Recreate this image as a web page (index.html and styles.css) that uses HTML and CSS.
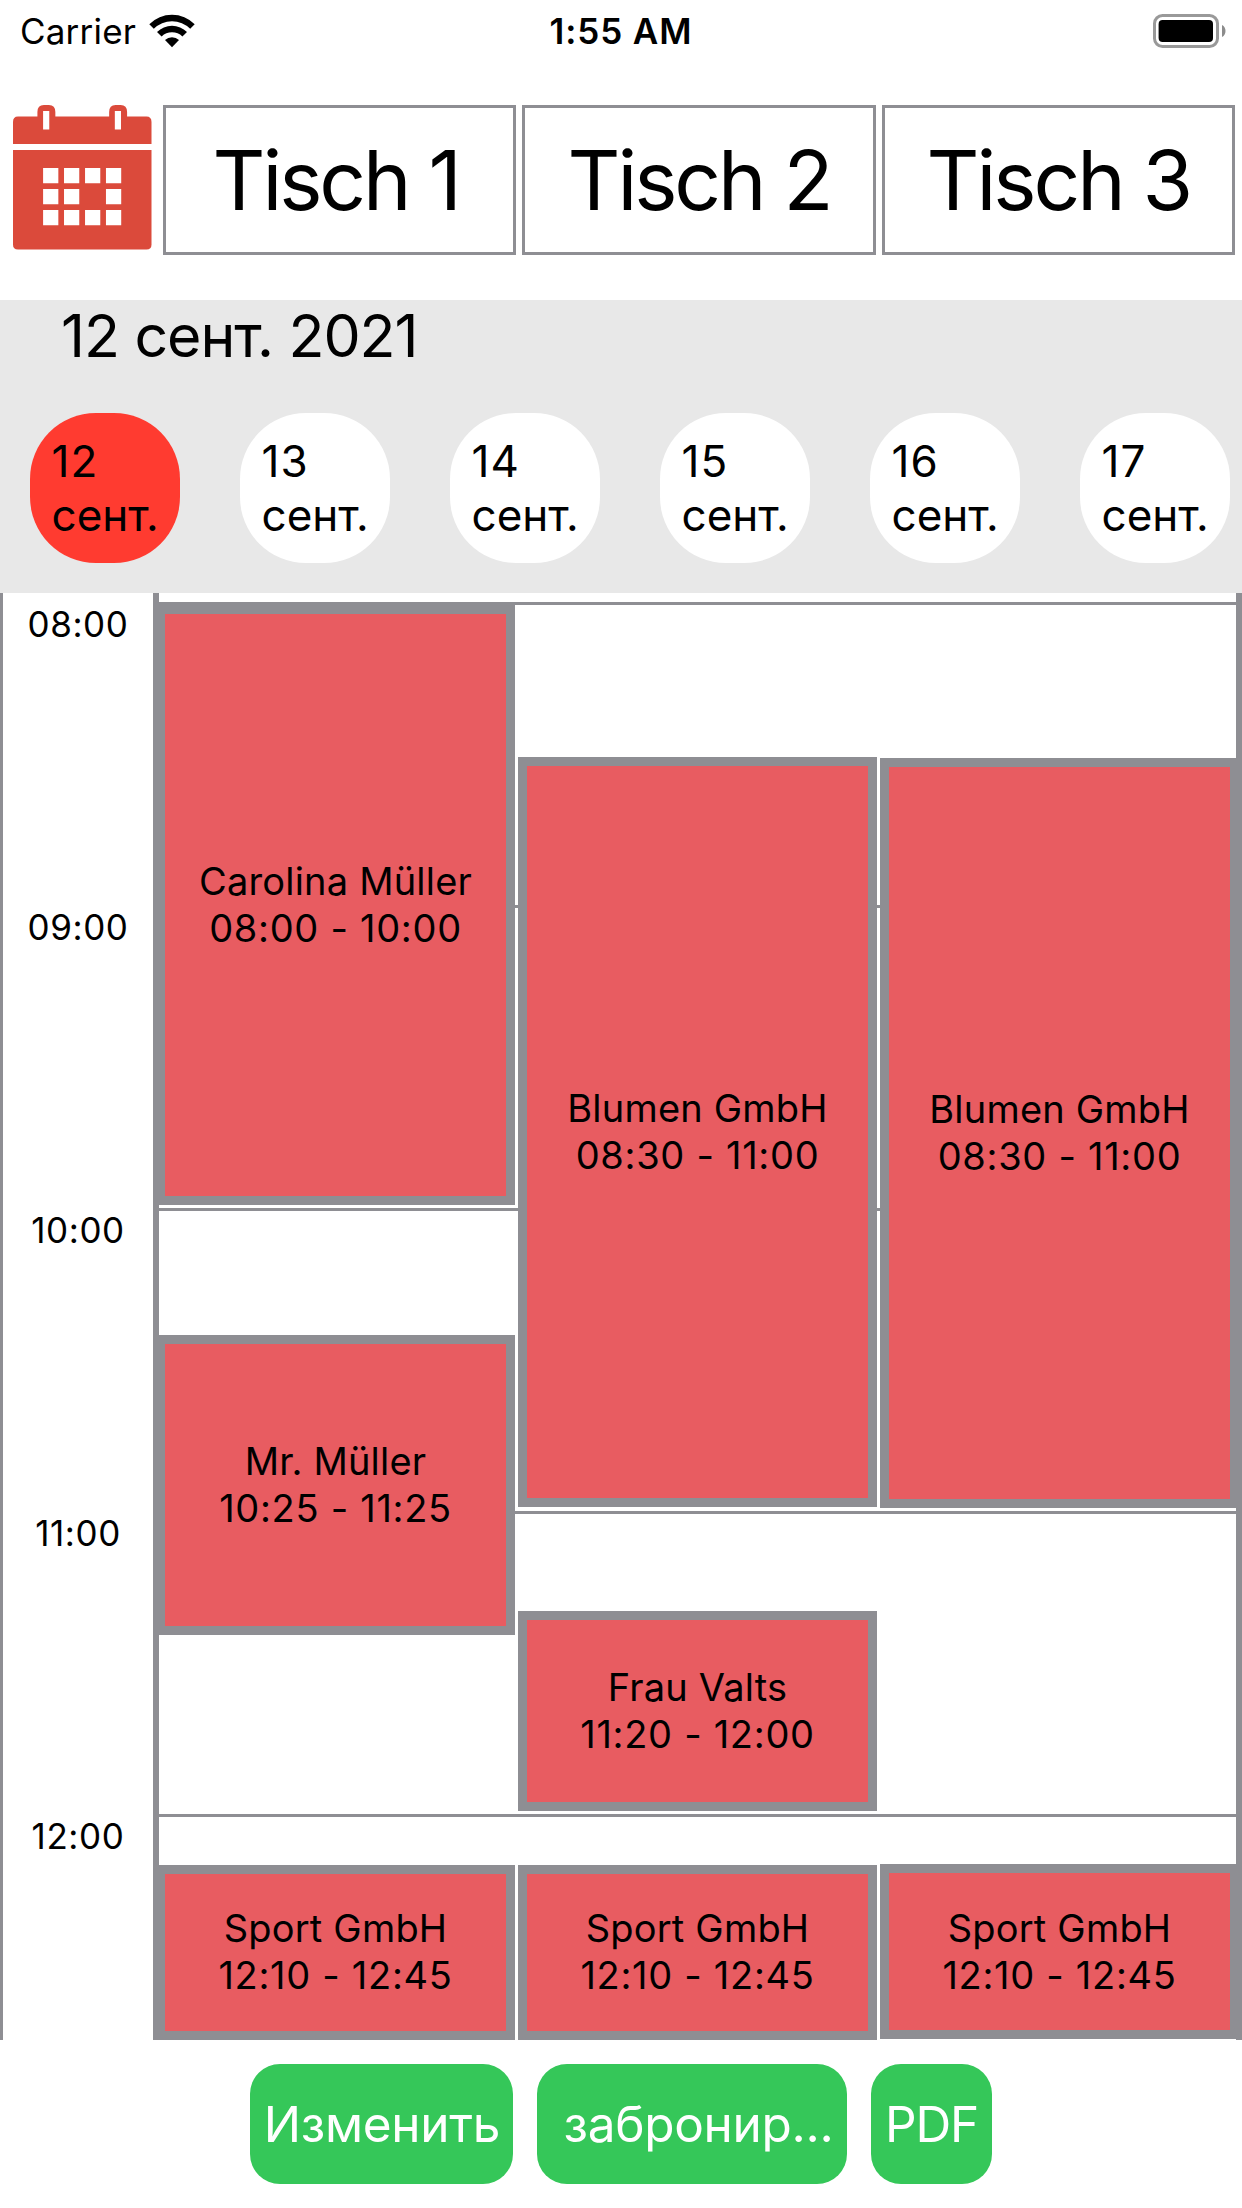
FILE: index.html
```html
<!DOCTYPE html>
<html lang="ru">
<head>
<meta charset="utf-8">
<title>Tischplan</title>
<link rel="stylesheet" href="styles.css">
</head>
<body>
<header class="status">
  <div class="status-left">
    <span class="carrier">Carrier</span>
    <svg class="wifi" width="46" height="34" viewBox="0 0 46 34">
      <path d="M0.3 10.2A32 32 0 0 1 45.7 10.2L41.2 14.8A25.8 25.8 0 0 0 4.8 14.8Z"/>
      <path d="M8 18A21.3 21.3 0 0 1 38 18L33.4 22.5A15 15 0 0 0 12.6 22.5Z"/>
      <path d="M16 26A10.2 10.2 0 0 1 30 26L23 33.2Z"/>
    </svg>
  </div>
  <time class="clock">1:55 AM</time>
  <svg class="battery" width="74" height="34" viewBox="0 0 74 34">
    <rect x="1.5" y="1.5" width="63" height="31" rx="8" fill="none" stroke="#999" stroke-width="3"/>
    <rect x="5.6" y="6" width="54.4" height="22" rx="4"/>
    <path d="M69 11C73.7 13.4 73.7 20.6 69 23Z" fill="#8c8c8c"/>
  </svg>
</header>

<nav class="tables">
  <svg class="calendar" width="138.500" height="145" viewBox="0 0 139 145" preserveAspectRatio="none">
    <path fill="#db4a3b" d="M0 39V17Q0 11.500 5 11.500H24.500V7Q24.500 0 31 0H36Q42.500 0 42.500 7V11.500H96.500V7Q96.500 0 103 0H108Q114.500 0 114.500 7V11.500H134Q139 11.500 139 17V39Z"/>
    <path fill="#db4a3b" d="M0 45H139V139.500Q139 144.500 134 144.500H5Q0 144.500 0 139.500Z"/>
    <path fill="#fff" d="M30.200 6h6.200v18.500h-6.200zM102.200 6h6.200v18.500h-6.200zM30.200 63h15.300v15.300h-15.300zM51.200 63h15.300v15.300h-15.300zM72.300 63h15.300v15.300h-15.300zM93.300 63h15.300v15.300h-15.300zM30.200 84h15.300v15.300h-15.300zM51.200 84h15.300v15.300h-15.300zM93.300 84h15.300v15.300h-15.300zM30.200 105h15.300v15.300h-15.300zM51.200 105h15.300v15.300h-15.300zM72.300 105h15.300v15.300h-15.300zM93.300 105h15.300v15.300h-15.300z"/>
  </svg>
  <div class="table-name first">Tisch 1</div>
  <div class="table-name">Tisch 2</div>
  <div class="table-name">Tisch 3</div>
</nav>

<section class="dates">
  <h1 class="date-title">12 сент. 2021</h1>
  <div class="days">
    <div class="day selected"><span class="num">12</span><span>сент.</span></div>
    <div class="day"><span class="num">13</span><span>сент.</span></div>
    <div class="day"><span class="num">14</span><span>сент.</span></div>
    <div class="day"><span class="num">15</span><span>сент.</span></div>
    <div class="day"><span class="num">16</span><span>сент.</span></div>
    <div class="day"><span class="num">17</span><span>сент.</span></div>
  </div>
</section>

<main class="schedule">
  <div class="hours">
    <div class="hour">08:00</div>
    <div class="hour">09:00</div>
    <div class="hour">10:00</div>
    <div class="hour">11:00</div>
    <div class="hour">12:00</div>
  </div>
  <div class="board">
    <div class="columns">
      <div class="column">
        <div class="event" style="margin-top:12px;height:600px"><span>Carolina Müller</span><span class="slot">08:00 - 10:00</span></div>
        <div class="event" style="margin-top:130px;height:300px"><span>Mr. Müller</span><span class="slot">10:25 - 11:25</span></div>
        <div class="event brief" style="margin-top:230px;height:175px"><span>Sport GmbH</span><span class="slot">12:10 - 12:45</span></div>
      </div>
      <div class="column">
        <div class="event" style="margin-top:164px;height:750px"><span>Blumen GmbH</span><span class="slot">08:30 - 11:00</span></div>
        <div class="event" style="margin-top:104px;height:200px"><span>Frau Valts</span><span class="slot">11:20 - 12:00</span></div>
        <div class="event brief" style="margin-top:54px;height:175px"><span>Sport GmbH</span><span class="slot">12:10 - 12:45</span></div>
      </div>
      <div class="column">
        <div class="event" style="margin-top:165px;height:750px"><span>Blumen GmbH</span><span class="slot">08:30 - 11:00</span></div>
        <div class="event" style="margin-top:356px;height:175px"><span>Sport GmbH</span><span class="slot">12:10 - 12:45</span></div>
      </div>
    </div>
  </div>
</main>

<footer class="actions">
  <button class="action edit">Изменить</button>
  <button class="action book">забронир...</button>
  <button class="action pdf">PDF</button>
</footer>
</body>
</html>
```
FILE: styles.css
```css
* { box-sizing: border-box; }

body {
  margin: 0;
  width: 1242px;
  height: 2208px;
  overflow: hidden;
  background: #fff;
  color: #000;
  font-family: Inter, "Liberation Sans", sans-serif;
}

svg { display: block; }

/* Status bar */
.status {
  display: grid;
  grid-template-columns: 1fr auto 1fr;
  align-items: center;
  height: 60px;
  padding: 0 15px 0 20px;
  font-size: 35px;
  line-height: 62px;
}
.status-left { display: flex; align-items: center; gap: 13px; }
.carrier { letter-spacing: .2px; }
.clock { padding-right: 5px; font-weight: 600; letter-spacing: .9px; }
.battery { justify-self: end; }

/* Table headings */
.tables {
  display: grid;
  grid-template-columns: 144px repeat(3, 1fr);
  column-gap: 6px;
  height: 150px;
  margin-top: 45px;
  padding: 0 7px 0 13px;
}
.table-name {
  display: flex;
  align-items: center;
  justify-content: center;
  border: 3px solid #8e8e93;
  font-size: 82px;
  letter-spacing: -3.1px;
}
.first { padding-right: 8px; }

/* Date strip */
.dates {
  height: 293px;
  margin-top: 45px;
  background: #e8e8e8;
}
.date-title {
  margin: 0;
  padding-left: 61px;
  font-size: 59px;
  font-weight: 400;
  line-height: 72px;
  letter-spacing: -1.05px;
}
.days { display: flex; gap: 60px; padding: 41px 0 0 30px; }
.day {
  display: flex;
  flex: none;
  flex-direction: column;
  justify-content: center;
  width: 150px;
  height: 150px;
  padding-left: 21.5px;
  border-radius: 66px;
  background: #fff;
  font-size: 44px;
  line-height: 54px;
}
.num { letter-spacing: 1px; }
.selected { background: #ff3b30; }

/* Schedule */
.schedule { display: flex; height: 1447px; }
.hours {
  width: 159px;
  padding-top: 12px;
  border: solid #8e8e93;
  border-width: 0 6px 0 3px;
}
.hour {
  height: 303px;
  font-size: 35px;
  line-height: 39px;
  letter-spacing: .6px;
  text-align: center;
}
.board {
  flex: 1;
  border-right: 6px solid #8e8e93;
  background: linear-gradient(#8e8e93 3px, transparent 3px) 0 9px / 100% 303px;
}
.columns {
  display: grid;
  grid-template-columns: repeat(3, 359px);
  column-gap: 3px;
  margin: 0 -3px;
}
.column { display: flex; flex-direction: column; }
.event {
  display: flex;
  flex: none;
  flex-direction: column;
  align-items: center;
  justify-content: center;
  border: 9px solid #8e8e93;
  background: #e85c61;
  font-size: 38px;
  line-height: 47px;
  letter-spacing: .2px;
}
.brief { padding-bottom: 2px; }
.slot { letter-spacing: .7px; }

/* Bottom buttons */
.actions {
  display: flex;
  justify-content: center;
  gap: 24px;
  padding-top: 24px;
}
.action {
  height: 120px;
  padding: 0;
  border: 0;
  border-radius: 30px;
  background: #35c759;
  color: #fff;
  font: 49.5px Inter, "Liberation Sans", sans-serif;
  white-space: nowrap;
}
.edit { width: 263px; padding-left: 1px; letter-spacing: -.3px; }
.book { width: 310px; padding-left: 13px; letter-spacing: -.3px; }
.pdf { width: 121px; letter-spacing: -1.2px; }
```
